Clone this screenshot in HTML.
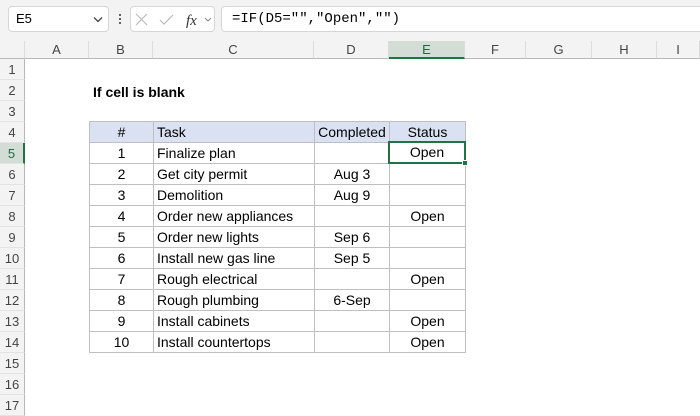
<!DOCTYPE html>
<html><head><style>
body{margin:0;width:700px;height:400px;overflow:hidden;background:#fff;font-family:"Liberation Sans",sans-serif;position:relative}
div{position:absolute;box-sizing:border-box}
.top{left:0;top:0;width:700px;height:41px;background:#f3f3f3}
.box{background:#fff;border:1px solid #d6d6d6;border-radius:4px;height:26px;top:6px}
.ch{top:41px;height:18px;background:#f3f3f3;border-right:1px solid #dcdcdc;border-bottom:1px solid #b8b8b8;font-size:13px;color:#444;text-align:center;line-height:17px}
.rh{left:0;width:25px;height:21px;background:#f3f3f3;border-right:1px solid #b8b8b8;border-bottom:1px solid #e3e3e3;font-size:13px;color:#444;text-align:center;line-height:21px}
.c{height:22px;border:1px solid #bfbfbf;font-size:14px;line-height:20px;white-space:nowrap}
.m{text-align:center}
.l{padding-left:3px}
.hd{background:#d9e1f2}
</style></head><body>
<div class="top"></div>
<div class="box" style="left:8px;width:101px"><span style="position:absolute;left:7px;top:4px;font-size:13px">E5</span><svg style="position:absolute;left:84px;top:9px" width="10" height="7"><path d="M1 1.5L5 5.5L9 1.5" stroke="#444" fill="none" stroke-width="1.3"/></svg></div>
<div style="left:119px;top:13px;width:2px;height:12px;background:radial-gradient(circle,#555 1px,transparent 1.2px) 0 0/2px 4px"></div>
<div class="box" style="left:130px;width:85px"><svg style="position:absolute;left:2px;top:5px" width="80" height="16"><path d="M3 2L14 13M14 2L3 13" stroke="#bbb" stroke-width="1.2"/><path d="M27 8L31 12L40 3" stroke="#bbb" fill="none" stroke-width="1.2"/><text x="53" y="13" font-family="Liberation Serif" font-style="italic" font-size="15" fill="#333">fx</text><path d="M72 6L75 9L78 6" stroke="#888" fill="none"/></svg></div>
<div class="box" style="left:221px;width:485px;border-radius:4px 0 0 4px"><span style="position:absolute;left:10px;top:4px;font-family:'Liberation Mono',monospace;font-size:14px">=IF(D5="","Open","")</span></div>

<div class="ch" style="left:0;width:25px"></div>
<div class="ch" style="left:25px;width:64px">A</div>
<div class="ch" style="left:89px;width:64px">B</div>
<div class="ch" style="left:153px;width:161px">C</div>
<div class="ch" style="left:314px;width:75px">D</div>
<div class="ch" style="left:389px;width:76px;background:#d3ddd6;color:#1e6b3c;border-bottom:2px solid #217346">E</div>
<div class="ch" style="left:465px;width:61px">F</div>
<div class="ch" style="left:526px;width:66px">G</div>
<div class="ch" style="left:592px;width:65px">H</div>
<div class="ch" style="left:657px;width:43px">I</div>

<div class="rh" style="top:59px">1</div>
<div class="rh" style="top:80px">2</div>
<div class="rh" style="top:101px">3</div>
<div class="rh" style="top:122px">4</div>
<div class="rh" style="top:143px;background:#d3ddd6;color:#1e6b3c;border-right:2px solid #217346">5</div>
<div class="rh" style="top:164px">6</div>
<div class="rh" style="top:185px">7</div>
<div class="rh" style="top:206px">8</div>
<div class="rh" style="top:227px">9</div>
<div class="rh" style="top:248px">10</div>
<div class="rh" style="top:269px">11</div>
<div class="rh" style="top:290px">12</div>
<div class="rh" style="top:311px">13</div>
<div class="rh" style="top:332px">14</div>
<div class="rh" style="top:353px">15</div>
<div class="rh" style="top:374px">16</div>
<div class="rh" style="top:395px">17</div>

<div style="left:93px;top:82px;font-size:14px;font-weight:bold;line-height:20px">If cell is blank</div>

<div class="c m hd" style="left:89px;top:121px;width:65px">#</div>
<div class="c l hd" style="left:153px;top:121px;width:162px">Task</div>
<div class="c m hd" style="left:314px;top:121px;width:76px">Completed</div>
<div class="c m hd" style="left:389px;top:121px;width:77px">Status</div>

<div class="c m" style="left:89px;top:142px;width:65px">1</div><div class="c l" style="left:153px;top:142px;width:162px">Finalize plan</div><div class="c m" style="left:314px;top:142px;width:76px"></div><div class="c m" style="left:389px;top:142px;width:77px"></div>
<div class="c m" style="left:89px;top:163px;width:65px">2</div><div class="c l" style="left:153px;top:163px;width:162px">Get city permit</div><div class="c m" style="left:314px;top:163px;width:76px">Aug 3</div><div class="c m" style="left:389px;top:163px;width:77px"></div>
<div class="c m" style="left:89px;top:184px;width:65px">3</div><div class="c l" style="left:153px;top:184px;width:162px">Demolition</div><div class="c m" style="left:314px;top:184px;width:76px">Aug 9</div><div class="c m" style="left:389px;top:184px;width:77px"></div>
<div class="c m" style="left:89px;top:205px;width:65px">4</div><div class="c l" style="left:153px;top:205px;width:162px">Order new appliances</div><div class="c m" style="left:314px;top:205px;width:76px"></div><div class="c m" style="left:389px;top:205px;width:77px">Open</div>
<div class="c m" style="left:89px;top:226px;width:65px">5</div><div class="c l" style="left:153px;top:226px;width:162px">Order new lights</div><div class="c m" style="left:314px;top:226px;width:76px">Sep 6</div><div class="c m" style="left:389px;top:226px;width:77px"></div>
<div class="c m" style="left:89px;top:247px;width:65px">6</div><div class="c l" style="left:153px;top:247px;width:162px">Install new gas line</div><div class="c m" style="left:314px;top:247px;width:76px">Sep 5</div><div class="c m" style="left:389px;top:247px;width:77px"></div>
<div class="c m" style="left:89px;top:268px;width:65px">7</div><div class="c l" style="left:153px;top:268px;width:162px">Rough electrical</div><div class="c m" style="left:314px;top:268px;width:76px"></div><div class="c m" style="left:389px;top:268px;width:77px">Open</div>
<div class="c m" style="left:89px;top:289px;width:65px">8</div><div class="c l" style="left:153px;top:289px;width:162px">Rough plumbing</div><div class="c m" style="left:314px;top:289px;width:76px">6-Sep</div><div class="c m" style="left:389px;top:289px;width:77px"></div>
<div class="c m" style="left:89px;top:310px;width:65px">9</div><div class="c l" style="left:153px;top:310px;width:162px">Install cabinets</div><div class="c m" style="left:314px;top:310px;width:76px"></div><div class="c m" style="left:389px;top:310px;width:77px">Open</div>
<div class="c m" style="left:89px;top:331px;width:65px">10</div><div class="c l" style="left:153px;top:331px;width:162px">Install countertops</div><div class="c m" style="left:314px;top:331px;width:76px"></div><div class="c m" style="left:389px;top:331px;width:77px">Open</div>

<div style="left:388px;top:141px;width:78px;height:23px;border:2px solid #217346;background:#fff;font-size:14px;line-height:19px;text-align:center">Open</div>
<div style="left:462px;top:160px;width:6px;height:6px;background:#217346;border:1px solid #fff"></div>
</body></html>
